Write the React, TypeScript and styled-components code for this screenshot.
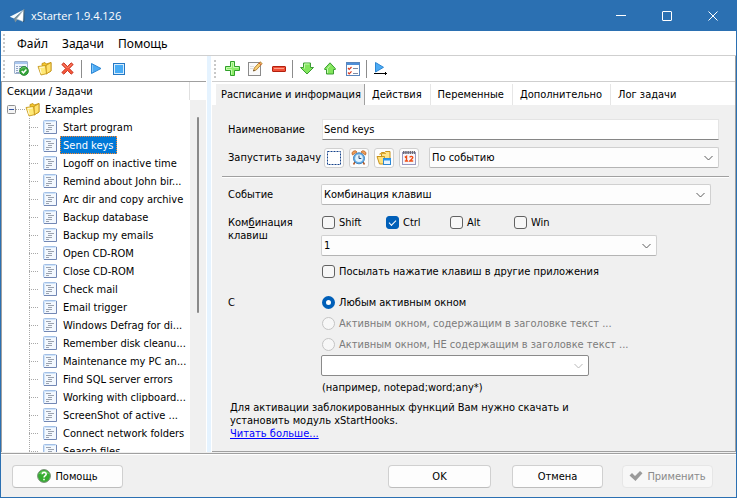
import React, { useState } from "react";
import type { ReactNode } from "react";
import styled, { createGlobalStyle, css } from "styled-components";

const UI = `"DejaVu Sans Condensed", "Noto Sans", sans-serif`;
const BLUE = "#2b70b2";
const FACE = "#f0f0f0";
const LINE = "#a0a0a0";

const Global = createGlobalStyle`
  *, *::before, *::after { box-sizing: border-box; }
  body { margin: 0; background: ${FACE}; }
  button, input, select { font: inherit; color: inherit; margin: 0; }
`;

const Window = styled.div`
  display: flex;
  flex-direction: column;
  height: 100vh;
  border: 1px solid ${BLUE};
  border-top: 0;
  background: ${FACE};
  color: #000;
  font: 11px/13px ${UI};
  overflow: hidden;
`;

const TitleBar = styled.header`
  display: flex;
  align-items: center;
  flex: none;
  height: 31px;
  padding-left: 8px;
  gap: 6px;
  background: ${BLUE};
  color: #fff;
`;

const Title = styled.h1`
  flex: 1;
  margin: 0;
  font: 400 11px/16px "Open Sans", "Noto Sans", sans-serif;
`;

const CaptionButtons = styled.div`
  display: flex;
`;

const CaptionButton = styled.button`
  display: grid;
  place-items: center;
  width: 46px;
  height: 31px;
  padding: 0;
  border: 0;
  background: none;
`;

const MenuBar = styled.nav`
  display: flex;
  align-items: center;
  flex: none;
  height: 25px;
  padding-left: 2px;
  border-bottom: 1px solid #cfcfcf;
  background: #fff;
`;

const Grip = styled.span`
  flex: none;
  width: 2px;
  height: 18px;
  margin-right: 5px;
  background: repeating-linear-gradient(#c8c8c8 0 2px, transparent 2px 4px);
`;

const MenuItem = styled.button`
  padding: 2px 7px 0;
  border: 0;
  background: none;
  font: 12px/16px "Noto Sans", sans-serif;
`;

const Body = styled.main`
  display: flex;
  flex: 1;
  min-height: 0;
`;

const Sidebar = styled.section`
  display: flex;
  flex-direction: column;
  flex: none;
  width: 205px;
  background: #fff;
`;

const Splitter = styled.div`
  flex: none;
  width: 6px;
  border: solid #fff;
  border-width: 0 1px;
  background: #e5f3ff;
`;

const Content = styled.section`
  display: flex;
  flex-direction: column;
  flex: 1;
  min-width: 0;
  border-right: 1px solid ${LINE};
  border-bottom: 1px solid ${LINE};
`;

const Toolbar = styled.div<{ $dark?: boolean }>`
  display: flex;
  align-items: center;
  flex: none;
  height: 26px;
  padding-left: 2px;
  border-bottom: 1px solid ${(p) => (p.$dark ? LINE : "#cfcfcf")};
  background: #fff;
`;

const ToolButton = styled.button`
  display: grid;
  place-items: center;
  width: 23px;
  height: 23px;
  padding: 0;
  border: 0;
  background: none;
`;

const ToolDivider = styled.span`
  width: 1px;
  height: 18px;
  margin: 0 2px;
  background: #8c8c8c;
`;

const Tree = styled.div`
  display: grid;
  grid-template-columns: 1fr 16px;
  grid-template-rows: 18px 1fr;
  flex: 1;
  min-height: 0;
  border-left: 1px solid ${LINE};
  overflow: hidden;
`;

const TreeHeading = styled.h2`
  margin: 0;
  padding-left: 5px;
  border-right: 1px solid #e0e0e0;
  font: 11px/20px ${UI};
`;

const TreeBody = styled.div`
  grid-row: 2;
  min-height: 0;
  overflow: hidden;
`;

const ScrollTrack = styled.div`
  grid-column: 2;
  grid-row: 2;
  display: flex;
  justify-content: center;
  padding-top: 17px;
  background: ${FACE};
`;

const ScrollThumb = styled.div`
  width: 2px;
  height: 196px;
  border-radius: 1px;
  background: #8a8a8a;
`;

const Branch = styled.div`
  display: flex;
  align-items: center;
  height: 18px;
  padding-left: 5px;
`;

const Expander = styled.button`
  display: block;
  padding: 0;
  border: 0;
  background: none;
  line-height: 0;
`;

const Twig = styled.span<{ $width: number }>`
  width: ${(p) => p.$width}px;
  height: 1px;
  background: repeating-linear-gradient(90deg, #a8a8a8 0 1px, transparent 1px 2px);
`;

const BranchName = styled.span`
  padding-left: 5px;
`;

const Leaves = styled.ul`
  margin: 0 0 0 27px;
  padding: 0;
  list-style: none;
  background: repeating-linear-gradient(#a8a8a8 0 1px, transparent 1px 2px) 0 0 / 1px 100% no-repeat;
`;

const Leaf = styled.li`
  display: flex;
  align-items: center;
  height: 18px;
`;

const LeafIcon = styled.span`
  margin: 0 3px 0 4px;
  line-height: 0;
`;

const LeafName = styled.button<{ $selected: boolean }>`
  height: 18px;
  padding: 1px 2px 0;
  border: 1px solid transparent;
  background: none;
  line-height: 15px;
  white-space: nowrap;
  ${(p) =>
    p.$selected &&
    css`
      border: 1px dotted #ff8728;
      background: #0078d7;
      color: #fff;
    `}
`;

const Tabs = styled.div`
  display: flex;
  flex: none;
  height: 23px;
  padding: 2px 0 0 4px;
  background: #fff;
`;

const Tab = styled.button<{ $active: boolean }>`
  padding: 0 8px 0 7px;
  border: 0;
  border-right: 1px solid ${(p) => (p.$active ? LINE : "#e6e6e6")};
  background: ${(p) => (p.$active ? FACE : "#fff")};
  ${(p) => p.$active && "padding: 0 3px 0 5px;"}
  &:last-child { border-color: transparent; }
`;

const Form = styled.form`
  flex: 1;
  min-height: 0;
  padding: 14px 6px 0 10px;
`;

const Row = styled.div<{ $gap?: number; $top?: boolean }>`
  display: grid;
  grid-template-columns: 94px 1fr;
  align-items: ${(p) => (p.$top ? "start" : "center")};
  margin-top: ${(p) => p.$gap ?? 0}px;
  padding: 0 10px 0 6px;
`;

const label = css`
  font: 11px/13px ${UI};
  white-space: nowrap;
`;

const FieldLabel = styled.label`
  ${label}
`;

const GroupLabel = styled.span`
  ${label}
`;

const Rule = styled.hr`
  height: 2px;
  margin: 8px 0 0;
  border: 0;
  border-top: 1px solid ${LINE};
  border-bottom: 1px solid #fff;
`;

const TextBox = styled.input`
  width: 100%;
  height: 21px;
  padding: 0 1px;
  border: 1px solid #e4e4e4;
  border-bottom-color: #868686;
  background: #fff;
`;

const Launch = styled.div`
  display: flex;
  align-items: center;
  gap: 5px;
  padding-left: 2px;
`;

const ModeButton = styled.button`
  display: grid;
  place-items: center;
  flex: none;
  width: 20px;
  height: 20px;
  padding: 0;
  border: 1px solid #d0d0d0;
  border-radius: 3px;
  background: #fdfdfd;
`;

const SelectFrame = styled.span<{ $width?: number }>`
  display: grid;
  align-items: center;
  flex: 1;
  margin-left: ${(p) => (p.$width ? -1 : 5)}px;
  width: ${(p) => (p.$width ? `min(${p.$width}px, 100%)` : "auto")};
  > * { grid-area: 1 / 1; }
  > svg { justify-self: end; margin-right: 6px; pointer-events: none; }
`;

const SelectBox = styled.select`
  appearance: none;
  width: 100%;
  height: 21px;
  padding: 0 20px 0 2px;
  border: 1px solid #d0d0d0;
  border-bottom-color: #b4b4b4;
  border-radius: 2px;
  background: #fdfdfd;
  &:disabled { border-color: #8a8a8a; background: #fff; opacity: 1; }
`;

const Checks = styled.div`
  display: grid;
  grid-template-columns: repeat(4, 64px);
`;

const Choice = styled.label<{ $off?: boolean }>`
  display: flex;
  align-items: center;
  gap: 4px;
  height: 13px;
  color: ${(p) => (p.$off ? "#7c7c7c" : "#000")};
`;

const CheckMark = styled.input`
  appearance: none;
  display: grid;
  place-items: center;
  flex: none;
  width: 13px;
  height: 13px;
  border: 1px solid #626262;
  border-radius: 3px;
  background: #f7f7f7;
  &:checked { border-color: #005fb8; background: #005fb8; }
  &:checked::after {
    content: "";
    width: 7px;
    height: 4px;
    margin-bottom: 2px;
    border: solid #fff;
    border-width: 0 0 1px 1px;
    rotate: -45deg;
  }
`;

const RadioMark = styled.input`
  appearance: none;
  flex: none;
  width: 13px;
  height: 13px;
  border: 1px solid #626262;
  border-radius: 50%;
  background: #f7f7f7;
  &:disabled { border-color: #c4c4c4; }
  &:checked { border: 4px solid #005fb8; background: #fff; }
`;

const Stack = styled.div<{ $gap: number }>`
  display: grid;
  gap: ${(p) => p.$gap}px;
`;

const Hint = styled.p`
  margin: 0;
`;

const Notice = styled.p`
  margin: 7px 0 0;
  padding-left: 8px;
  max-width: 360px;
`;

const More = styled.a`
  color: #0000ff;
`;

const Footer = styled.footer`
  display: flex;
  align-items: center;
  flex: none;
  height: 44px;
  margin-top: 1px;
  padding: 1px 23px 0 11px;
  border-top: 1px solid ${LINE};
  box-shadow: inset 0 1px #fff;
`;

const Spacer = styled.span`
  flex: 1;
`;

const PushButton = styled.button<{ $width: number; $after?: number }>`
  display: flex;
  align-items: center;
  justify-content: center;
  gap: 4px;
  width: ${(p) => p.$width}px;
  height: 23px;
  margin-right: ${(p) => p.$after ?? 0}px;
  padding: 0;
  border: 1px solid #d0d0d0;
  border-bottom-color: #bdbdbd;
  border-radius: 4px;
  background: #fdfdfd;
  &:disabled { border-color: #e6e6e6; background: #f7f7f7; color: #8a8a8a; }
`;

const Icon = ({ w = 15, h = 15, children }: { w?: number; h?: number; children: ReactNode }) => (
  <svg width={w} height={h} viewBox={`0 0 ${w} ${h}`} fill="none" aria-hidden="true">
    {children}
  </svg>
);

const PlaneIcon = () => (
  <Icon w={16} h={16}>
    <path d="M15 1.500.800 8.800 5 10.500z" fill="#f4fafc" />
    <path d="M15 1.500 5 10.500 6.200 14.500 8.500 11.500z" fill="#7c929b" />
    <path d="M15 1.500 7.500 11 14 13.500z" fill="#fff" stroke="#a9bec8" strokeWidth=".5" />
    <path d="M15 1.500v12l-1 .2" stroke="#3a4a52" strokeWidth=".7" />
  </Icon>
);

const FolderIcon = () => (
  <Icon>
    <path d="M5 4V2.500l3-1 1 1.500 5-1.500v8.500L9 13z" fill="#f3c62c" stroke="#c08f10" strokeWidth=".8" />
    <path d="m9 4.500 5-3v8.500L9 13z" fill="#ffe06a" stroke="#c08f10" strokeWidth=".8" />
    <path d="M1 5.500 8.500 4.500 9.500 12.700 4 14z" fill="#ffe977" stroke="#c08f10" strokeWidth=".8" />
    <path d="M2.500 6.500 7.500 6M3 7.500l1.200 5" stroke="#fffbd8" />
  </Icon>
);

const TaskIcon = () => (
  <Icon w={14} h={14}>
    <rect x=".5" y=".5" width="13" height="13" rx="1" fill="#f3f8fe" stroke="#a4c0e6" />
    <path d="M13.500 1v12.500H1" stroke="#7287b4" />
    <path d="M1.500 12.500V1.500h11" stroke="#cfe4fa" />
    <path d="M3 3.500h5M5 5.500h6M5 7.500h4M3 9.500h6M3 11.500h3" stroke="#9ba3b0" />
  </Icon>
);

const ExpanderIcon = () => (
  <Icon w={9} h={9}>
    <rect x=".5" y=".5" width="8" height="8" rx="1" fill="#f4f4f4" stroke="#919191" />
    <path d="M2 4.500h5" stroke="#3352a3" />
  </Icon>
);

const TaskDoneIcon = () => (
  <Icon>
    <rect x=".5" y=".5" width="13" height="12" rx=".5" fill="#f1f6fd" stroke="#9db0cc" />
    <path d="M1 2h12" stroke="#a9c6ee" strokeWidth="2" />
    <path d="M2 5.500h2M5 5.500h7M2 7.500h2M5 7.500h3M2 9.500h2M2 11.500h3" stroke="#90a4c4" />
    <circle cx="10" cy="10" r="4.400" fill="#34a53a" stroke="#1f8228" strokeWidth=".8" />
    <path d="M6.800 8.500a3.500 3 0 0 1 5-1.500" stroke="#88d484" strokeWidth=".8" />
    <path d="m7.700 10 1.700 1.800 3-3.300" stroke="#fff" strokeWidth="1.500" />
  </Icon>
);

const CrossIcon = () => (
  <Icon w={13} h={13}>
    <path
      d="M.800 2.500 2.800.800l3.700 3.700L10.200.800l2 1.700-3.900 4 3.900 4-2 1.700-3.700-3.700-3.700 3.700-2-1.700 3.900-4z"
      fill="#f4583c"
      stroke="#bf2412"
      strokeWidth=".8"
    />
    <path d="m2.500 2.300 3.500 3.500M10.500 2.300 7 5.800" stroke="#ff9f88" strokeWidth=".8" />
  </Icon>
);

const PlayIcon = () => (
  <Icon w={12} h={13}>
    <path d="M1.500 1.500v10l9.500-5z" fill="#4cabf5" stroke="#2d86d2" />
    <path d="M2.500 3v7" stroke="#8ccaf9" />
  </Icon>
);

const StopIcon = () => (
  <Icon w={12} h={12}>
    <rect x=".5" y=".5" width="11" height="11" fill="#d6ecfc" stroke="#2478c4" />
    <rect x="2" y="2" width="8" height="8" fill="#48acf6" />
  </Icon>
);

const PlusIcon = () => (
  <Icon>
    <path d="M5.500.5h4v5h5v4h-5v5h-4v-5h-5v-4h5z" fill="#8cec68" stroke="#30a02a" />
    <path d="M6.500 13.500v-5h-5v-2h5v-5h2v5h5" stroke="#c4fbae" />
  </Icon>
);

const EditIcon = () => (
  <Icon>
    <rect x=".5" y="1.500" width="12" height="13" fill="#fafafa" stroke="#8b8b8b" />
    <path d="M2 5.500h4M2 7.500h3" stroke="#dcdcdc" />
    <path d="m5.500 10 .8-3L12 .8l2.200 1.700-6 6.500z" fill="#f8d075" stroke="#a87020" strokeWidth=".8" />
    <path d="m11 2 2.200 1.800" stroke="#d6452c" />
    <path d="m5.300 10.300.5-1.500 1 .9z" fill="#333" />
  </Icon>
);

const MinusIcon = () => (
  <Icon w={14} h={6}>
    <rect x=".5" y=".5" width="13" height="5" rx=".5" fill="#f05038" stroke="#b3200f" />
    <path d="M2 2.500h10" stroke="#ff9d88" />
  </Icon>
);

const DownIcon = () => (
  <Icon w={14} h={13}>
    <path d="M3.500 1h7v4.500h3L7 12 .5 5.500h3z" fill="#82e65c" stroke="#3c9c34" />
    <path d="M4.500 6.500V2h5" stroke="#c8f9b0" />
  </Icon>
);

const UpIcon = () => (
  <Icon w={12} h={13}>
    <path d="M6 .8.700 6.500v1h1.800V12h7V7.500h1.800v-1z" fill="#82e65c" stroke="#3c9c34" />
    <path d="M3.500 11V6.500L6 3.500" stroke="#c8f9b0" />
  </Icon>
);

const ListIcon = () => (
  <Icon w={14} h={14}>
    <rect x=".5" y=".5" width="13" height="13" fill="#fff" stroke="#5a86bc" />
    <path d="M1 2h12" stroke="#4f8fd8" strokeWidth="2" />
    <path d="m2 6 1.200 1.300L5.500 5M2 10.500l1.200 1.300 2.300-2.500" stroke="#d83a20" strokeWidth="1.200" />
    <path d="M7 6.500h5M7 11.500h5" stroke="#7d8ba4" />
  </Icon>
);

const StepIcon = () => (
  <Icon w={15} h={14}>
    <path d="M2.500.500v9.500l8-4.700z" fill="#4cabf5" stroke="#2d86d2" />
    <path d="M1 11.500h13M12.500 10v3" stroke="#000" />
  </Icon>
);

const FrameIcon = () => (
  <Icon w={14} h={14}>
    <rect x=".5" y=".5" width="13" height="13" fill="#fff" stroke="#15428b" strokeDasharray="2 1" />
  </Icon>
);

const ClockIcon = () => (
  <Icon w={16} h={16}>
    <path d="m4 12-1.500 2.500M12 12l1.500 2.500" stroke="#b05a2c" strokeWidth="1.500" />
    <path d="M1.500 5A2.500 2.500 0 0 1 6 2zM14.500 5A2.500 2.500 0 0 0 10 2z" fill="#f2a05a" stroke="#b8642a" strokeWidth=".8" />
    <circle cx="8" cy="8.300" r="5.500" fill="#68aee6" stroke="#4484bc" />
    <circle cx="8" cy="8.300" r="3.800" fill="#e2f3fd" />
    <path d="M8 5.500v3h2.300" stroke="#2a4a78" />
  </Icon>
);

const FolderWindowIcon = () => (
  <Icon w={16} h={16}>
    <path d="M5.500 2.500h3l1-1h4.500v9H5.500z" fill="#ffe48a" stroke="#c8921c" />
    <path d="M1 6.500h7.500l-.5 7.500H3.500z" fill="#ffe27c" stroke="#c8921c" />
    <path d="M4 5v-1.500h6" stroke="#dca62c" />
    <rect x="7.500" y="8.500" width="7" height="6" fill="#e9f5ff" stroke="#2d86d2" />
    <path d="M7 9.500h8" stroke="#2d96ee" strokeWidth="2" />
  </Icon>
);

const CalendarIcon = () => (
  <Icon w={14} h={15}>
    <rect x=".5" y="2.500" width="13" height="12" fill="#f6f6fc" stroke="#9898c0" />
    <path d="M1 2.500h12" stroke="#6c6c78" strokeWidth="3" strokeDasharray="1.500 .7" />
    <path d="m2.800 7.300 1.700-1V11M2.800 11h3.200M7.800 7.300c.3-1.200 3-1.200 3 .2 0 1-1.500 1.800-3 3.500h3.400" stroke="#f04c14" strokeWidth="1.400" />
  </Icon>
);

const Chevron = ({ color = "#5c5c5c" }: { color?: string }) => (
  <Icon w={9} h={6}>
    <path d="m.5 1 4 4 4-4" stroke={color} />
  </Icon>
);

const HelpIcon = () => (
  <Icon w={14} h={14}>
    <circle cx="7" cy="7" r="6.400" fill="#35ad30" stroke="#7b8f7b" />
    <path d="M2.500 5a5 4.500 0 0 1 9 0" stroke="#86dd7c" />
    <path d="M5 5.300c.2-2.300 4.200-2.200 4.200 0C9.200 6.700 7 6.700 7 8.500M7 9.700v1.500" stroke="#fff" strokeWidth="1.500" />
  </Icon>
);

const ApplyIcon = () => (
  <Icon w={14} h={12}>
    <path d="M.5 5.500 3 3l3 3 5-5L13.500 3.200 6.500 11z" fill="#9a9a9a" />
  </Icon>
);

const tasks = [
  "Start program",
  "Send keys",
  "Logoff on inactive time",
  "Remind about John bir...",
  "Arc dir and copy archive",
  "Backup database",
  "Backup my emails",
  "Open CD-ROM",
  "Close CD-ROM",
  "Check mail",
  "Email trigger",
  "Windows Defrag for di...",
  "Remember disk cleanu...",
  "Maintenance my PC an...",
  "Find SQL server errors",
  "Working with clipboard...",
  "ScreenShot of active ...",
  "Connect network folders",
  "Search files",
];

const tabs = ["Расписание и информация", "Действия", "Переменные", "Дополнительно", "Лог задачи"];

const Select = ({ id, value, width, disabled, name }: { id?: string; value: string; width?: number; disabled?: boolean; name?: string }) => (
  <SelectFrame $width={width}>
    <SelectBox id={id} disabled={disabled} aria-label={name}>
      <option>{value}</option>
    </SelectBox>
    <Chevron color={disabled ? "#b8b8b8" : undefined} />
  </SelectFrame>
);

export default function App() {
  const [task, setTask] = useState("Send keys");
  const [tab, setTab] = useState(tabs[0]);

  return (
    <Window>
      <Global />
      <TitleBar>
        <PlaneIcon />
        <Title>xStarter 1.9.4.126</Title>
        <CaptionButtons>
          <CaptionButton aria-label="Свернуть">
            <Icon w={10} h={10}><path d="M0 4.500h10" stroke="#fff" /></Icon>
          </CaptionButton>
          <CaptionButton aria-label="Развернуть">
            <Icon w={10} h={10}><rect x=".5" y=".5" width="9" height="9" rx=".5" stroke="#fff" /></Icon>
          </CaptionButton>
          <CaptionButton aria-label="Закрыть">
            <Icon w={10} h={10}><path d="m.5.5 9 9M9.500.5l-9 9" stroke="#fff" /></Icon>
          </CaptionButton>
        </CaptionButtons>
      </TitleBar>

      <MenuBar>
        <Grip />
        <MenuItem>Файл</MenuItem>
        <MenuItem>Задачи</MenuItem>
        <MenuItem>Помощь</MenuItem>
      </MenuBar>

      <Body>
        <Sidebar>
          <Toolbar $dark>
            <Grip />
            <ToolButton aria-label="Новая задача"><TaskDoneIcon /></ToolButton>
            <ToolButton aria-label="Новая секция"><FolderIcon /></ToolButton>
            <ToolButton aria-label="Удалить"><CrossIcon /></ToolButton>
            <ToolDivider />
            <ToolButton aria-label="Запустить"><PlayIcon /></ToolButton>
            <ToolButton aria-label="Остановить"><StopIcon /></ToolButton>
          </Toolbar>
          <Tree>
            <TreeHeading>Секции / Задачи</TreeHeading>
            <TreeBody>
              <Branch>
                <Expander aria-label="Examples" aria-expanded="true"><ExpanderIcon /></Expander>
                <Twig $width={9} />
                <FolderIcon />
                <BranchName>Examples</BranchName>
              </Branch>
              <Leaves>
                {tasks.map((name) => (
                  <Leaf key={name}>
                    <Twig $width={10} />
                    <LeafIcon><TaskIcon /></LeafIcon>
                    <LeafName $selected={name === task} onClick={() => setTask(name)}>{name}</LeafName>
                  </Leaf>
                ))}
              </Leaves>
            </TreeBody>
            <ScrollTrack><ScrollThumb /></ScrollTrack>
          </Tree>
        </Sidebar>
        <Splitter />
        <Content>
          <Toolbar>
            <Grip />
            <ToolButton aria-label="Добавить"><PlusIcon /></ToolButton>
            <ToolButton aria-label="Изменить"><EditIcon /></ToolButton>
            <ToolButton aria-label="Убрать"><MinusIcon /></ToolButton>
            <ToolDivider />
            <ToolButton aria-label="Вниз"><DownIcon /></ToolButton>
            <ToolButton aria-label="Вверх"><UpIcon /></ToolButton>
            <ToolButton aria-label="Список"><ListIcon /></ToolButton>
            <ToolDivider />
            <ToolButton aria-label="Выполнить"><StepIcon /></ToolButton>
          </Toolbar>
          <Tabs role="tablist">
            {tabs.map((name) => (
              <Tab key={name} role="tab" aria-selected={name === tab} $active={name === tab} onClick={() => setTab(name)}>
                {name}
              </Tab>
            ))}
          </Tabs>
          <Form onSubmit={(e) => e.preventDefault()}>
            <Row>
              <FieldLabel htmlFor="name">Наименование</FieldLabel>
              <TextBox id="name" defaultValue="Send keys" />
            </Row>
            <Row $gap={7}>
              <FieldLabel htmlFor="launch">Запустить задачу</FieldLabel>
              <Launch>
                <ModeButton type="button" aria-label="Вручную"><FrameIcon /></ModeButton>
                <ModeButton type="button" aria-label="По времени"><ClockIcon /></ModeButton>
                <ModeButton type="button" aria-label="По событию"><FolderWindowIcon /></ModeButton>
                <ModeButton type="button" aria-label="По календарю"><CalendarIcon /></ModeButton>
                <Select id="launch" value="По событию" />
              </Launch>
            </Row>
            <Rule />
            <Row $gap={6}>
              <FieldLabel htmlFor="event">Событие</FieldLabel>
              <Select id="event" value="Комбинация клавиш" width={390} />
            </Row>
            <Row $gap={11} $top>
              <GroupLabel>
                Ком<u>б</u>инация
                <br />
                клавиш
              </GroupLabel>
              <Stack $gap={6}>
                <Checks>
                  <Choice><CheckMark type="checkbox" />Shift</Choice>
                  <Choice><CheckMark type="checkbox" defaultChecked />Ctrl</Choice>
                  <Choice><CheckMark type="checkbox" />Alt</Choice>
                  <Choice><CheckMark type="checkbox" />Win</Choice>
                </Checks>
                <Select name="Клавиша" value="1" width={336} />
              </Stack>
            </Row>
            <Row $gap={9}>
              <span />
              <Choice><CheckMark type="checkbox" />Посылать нажатие клавиш в другие приложения</Choice>
            </Row>
            <Row $gap={18} $top>
              <GroupLabel>С</GroupLabel>
              <Stack $gap={8}>
                <Choice><RadioMark type="radio" name="target" defaultChecked />Любым активным окном</Choice>
                <Choice $off><RadioMark type="radio" name="target" disabled />Активным окном, содержащим в заголовке текст ...</Choice>
                <Choice $off><RadioMark type="radio" name="target" disabled />Активным окном, НЕ содержащим в заголовке текст ...</Choice>
              </Stack>
            </Row>
            <Row $gap={4}>
              <span />
              <Select name="Текст заголовка" value="" width={268} disabled />
            </Row>
            <Row $gap={5}>
              <span />
              <Hint>(например, notepad;word;any*)</Hint>
            </Row>
            <Notice>
              Для активации заблокированных функций Вам нужно скачать и установить модуль xStartHooks.
              <br />
              <More href="#more">Читать больше...</More>
            </Notice>
          </Form>
        </Content>
      </Body>

      <Footer>
        <PushButton $width={111}><HelpIcon />Помощь</PushButton>
        <Spacer />
        <PushButton $width={103} $after={21}>OK</PushButton>
        <PushButton $width={91} $after={19}>Отмена</PushButton>
        <PushButton $width={91} disabled><ApplyIcon />Применить</PushButton>
      </Footer>
    </Window>
  );
}
